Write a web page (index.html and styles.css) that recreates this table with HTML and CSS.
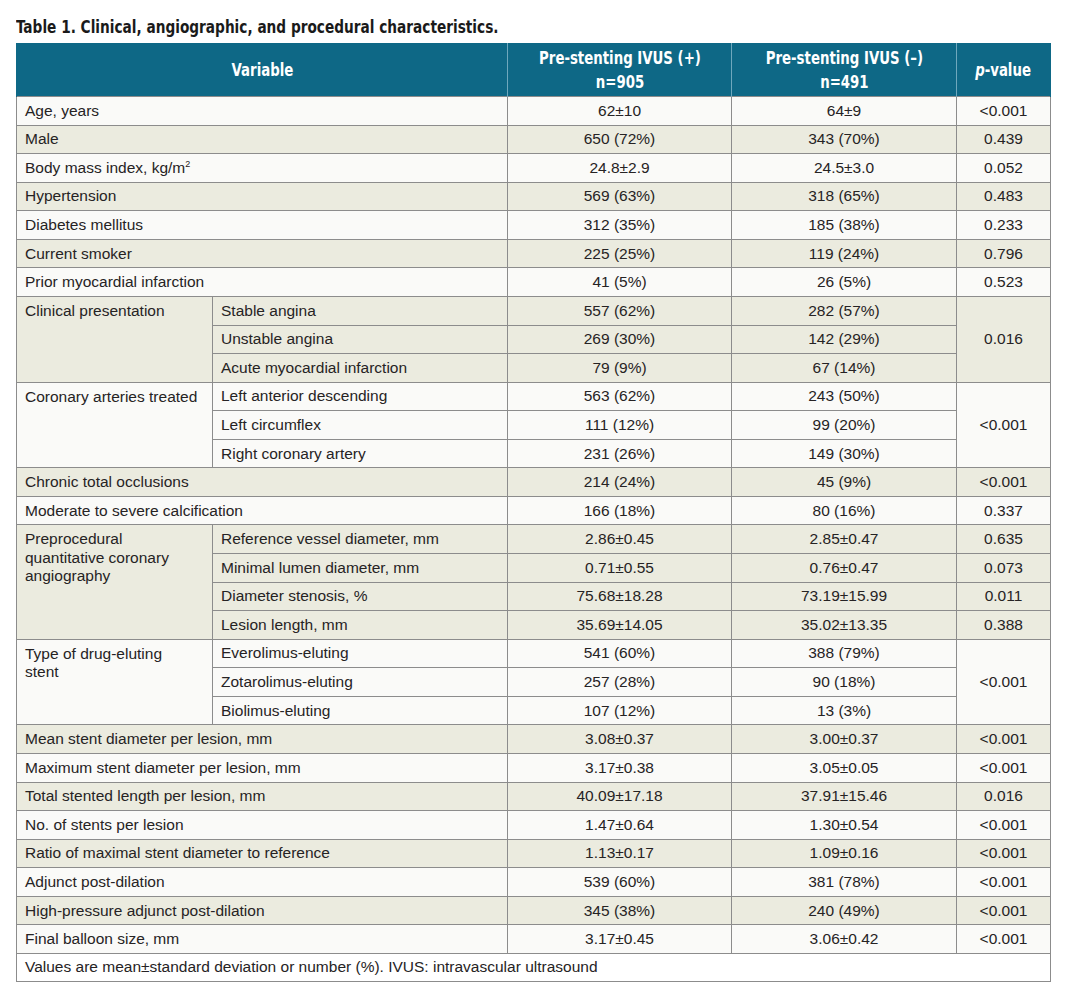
FILE: index.html
```html
<!DOCTYPE html>
<html lang="en">
<head>
<meta charset="utf-8">
<title>Table 1</title>
<link rel="stylesheet" href="styles.css">
</head>
<body>
<div class="page">
  <h1 class="caption"><span class="squeeze">Table 1. Clinical, angiographic, and procedural characteristics.</span></h1>
  <table class="data">
    <colgroup>
      <col class="c-var">
      <col class="c-sub">
      <col class="c-pos">
      <col class="c-neg">
      <col class="c-p">
    </colgroup>
    <thead>
      <tr>
        <th colspan="2"><span class="hs">Variable</span></th>
        <th><span class="hs">Pre-stenting IVUS (+)<br>n=905</span></th>
        <th><span class="hs">Pre-stenting IVUS (–)<br>n=491</span></th>
        <th><span class="hs"><i>p</i>-value</span></th>
      </tr>
    </thead>
    <tbody>
      <tr class="w"><td colspan="2" class="lbl">Age, years</td><td>62±10</td><td>64±9</td><td>&lt;0.001</td></tr>
      <tr class="b"><td colspan="2" class="lbl">Male</td><td>650 (72%)</td><td>343 (70%)</td><td>0.439</td></tr>
      <tr class="w"><td colspan="2" class="lbl">Body mass index, kg/m<sup>2</sup></td><td>24.8±2.9</td><td>24.5±3.0</td><td>0.052</td></tr>
      <tr class="b"><td colspan="2" class="lbl">Hypertension</td><td>569 (63%)</td><td>318 (65%)</td><td>0.483</td></tr>
      <tr class="w"><td colspan="2" class="lbl">Diabetes mellitus</td><td>312 (35%)</td><td>185 (38%)</td><td>0.233</td></tr>
      <tr class="b"><td colspan="2" class="lbl">Current smoker</td><td>225 (25%)</td><td>119 (24%)</td><td>0.796</td></tr>
      <tr class="w"><td colspan="2" class="lbl">Prior myocardial infarction</td><td>41 (5%)</td><td>26 (5%)</td><td>0.523</td></tr>

      <tr class="b"><td rowspan="3" class="lbl grp">Clinical presentation</td><td class="lbl">Stable angina</td><td>557 (62%)</td><td>282 (57%)</td><td rowspan="3">0.016</td></tr>
      <tr class="b"><td class="lbl">Unstable angina</td><td>269 (30%)</td><td>142 (29%)</td></tr>
      <tr class="b"><td class="lbl">Acute myocardial infarction</td><td>79 (9%)</td><td>67 (14%)</td></tr>

      <tr class="w"><td rowspan="3" class="lbl grp">Coronary arteries treated</td><td class="lbl">Left anterior descending</td><td>563 (62%)</td><td>243 (50%)</td><td rowspan="3">&lt;0.001</td></tr>
      <tr class="w"><td class="lbl">Left circumflex</td><td>111 (12%)</td><td>99 (20%)</td></tr>
      <tr class="w"><td class="lbl">Right coronary artery</td><td>231 (26%)</td><td>149 (30%)</td></tr>

      <tr class="b"><td colspan="2" class="lbl">Chronic total occlusions</td><td>214 (24%)</td><td>45 (9%)</td><td>&lt;0.001</td></tr>
      <tr class="w"><td colspan="2" class="lbl">Moderate to severe calcification</td><td>166 (18%)</td><td>80 (16%)</td><td>0.337</td></tr>

      <tr class="b"><td rowspan="4" class="lbl grp">Preprocedural<br>quantitative coronary<br>angiography</td><td class="lbl">Reference vessel diameter, mm</td><td>2.86±0.45</td><td>2.85±0.47</td><td>0.635</td></tr>
      <tr class="b"><td class="lbl">Minimal lumen diameter, mm</td><td>0.71±0.55</td><td>0.76±0.47</td><td>0.073</td></tr>
      <tr class="b"><td class="lbl">Diameter stenosis, %</td><td>75.68±18.28</td><td>73.19±15.99</td><td>0.011</td></tr>
      <tr class="b"><td class="lbl">Lesion length, mm</td><td>35.69±14.05</td><td>35.02±13.35</td><td>0.388</td></tr>

      <tr class="w"><td rowspan="3" class="lbl grp">Type of drug-eluting<br>stent</td><td class="lbl">Everolimus-eluting</td><td>541 (60%)</td><td>388 (79%)</td><td rowspan="3">&lt;0.001</td></tr>
      <tr class="w"><td class="lbl">Zotarolimus-eluting</td><td>257 (28%)</td><td>90 (18%)</td></tr>
      <tr class="w"><td class="lbl">Biolimus-eluting</td><td>107 (12%)</td><td>13 (3%)</td></tr>

      <tr class="b"><td colspan="2" class="lbl">Mean stent diameter per lesion, mm</td><td>3.08±0.37</td><td>3.00±0.37</td><td>&lt;0.001</td></tr>
      <tr class="w"><td colspan="2" class="lbl">Maximum stent diameter per lesion, mm</td><td>3.17±0.38</td><td>3.05±0.05</td><td>&lt;0.001</td></tr>
      <tr class="b"><td colspan="2" class="lbl">Total stented length per lesion, mm</td><td>40.09±17.18</td><td>37.91±15.46</td><td>0.016</td></tr>
      <tr class="w"><td colspan="2" class="lbl">No. of stents per lesion</td><td>1.47±0.64</td><td>1.30±0.54</td><td>&lt;0.001</td></tr>
      <tr class="b"><td colspan="2" class="lbl">Ratio of maximal stent diameter to reference</td><td>1.13±0.17</td><td>1.09±0.16</td><td>&lt;0.001</td></tr>
      <tr class="w"><td colspan="2" class="lbl">Adjunct post-dilation</td><td>539 (60%)</td><td>381 (78%)</td><td>&lt;0.001</td></tr>
      <tr class="b"><td colspan="2" class="lbl">High-pressure adjunct post-dilation</td><td>345 (38%)</td><td>240 (49%)</td><td>&lt;0.001</td></tr>
      <tr class="w"><td colspan="2" class="lbl">Final balloon size, mm</td><td>3.17±0.45</td><td>3.06±0.42</td><td>&lt;0.001</td></tr>
    </tbody>
    <tfoot>
      <tr><td colspan="5" class="lbl note">Values are mean±standard deviation or number (%). IVUS: intravascular ultrasound</td></tr>
    </tfoot>
  </table>
</div>
</body>
</html>
```

FILE: styles.css
```css
html, body {
  margin: 0;
  padding: 0;
  background: #ffffff;
}

.page {
  padding: 16px 19px 0 16px;
  font-family: "Liberation Sans", Arial, sans-serif;
  color: #262324;
}

.caption {
  margin: 0 0 6px 0;
  height: 21px;
  font-family: "DejaVu Sans Condensed", "Liberation Sans Narrow", "Liberation Sans", sans-serif;
  font-stretch: condensed;
  font-weight: bold;
  font-size: 18px;
  line-height: 21px;
  color: #1a1a1a;
  white-space: nowrap;
}

.squeeze {
  display: inline-block;
  transform: scaleX(0.845);
  transform-origin: 0 50%;
}

.data {
  width: 1034px;
  border-collapse: collapse;
  table-layout: fixed;
  font-size: 15.5px;
}

.c-var { width: 196px; }
.c-sub { width: 295px; }
.c-pos { width: 224px; }
.c-neg { width: 225px; }
.c-p { width: 94px; }

.data th {
  background: #0e6886;
  color: #ffffff;
  font-family: "DejaVu Sans Condensed", "Liberation Sans Narrow", "Liberation Sans", sans-serif;
  font-stretch: condensed;
  font-weight: bold;
  font-size: 17px;
  line-height: 24px;
  height: 53px;
  padding: 0;
  text-align: center;
  vertical-align: middle;
  border-left: 1px solid #6fa8bd;
  border-right: 1px solid #6fa8bd;
  white-space: nowrap;
}

.data th:first-child { border-left: 1px solid #0e6886; }
.data th:last-child { border-right: 1px solid #0e6886; }

.hs {
  display: inline-block;
  transform: scaleX(0.87);
  transform-origin: 50% 50%;
}

.data th i {
  font-style: italic;
}

.data td {
  height: 27.57px;
  padding: 0 8px;
  border: 1px solid #8c8c8c;
  text-align: center;
  vertical-align: middle;
  line-height: 18px;
  white-space: nowrap;
}

.data td.lbl {
  text-align: left;
}

.data td.grp {
  vertical-align: top;
  padding-top: 5px;
  line-height: 18.5px;
}

.data sup {
  font-size: 9px;
  line-height: 0;
  vertical-align: 6px;
}

.data tr.w td { background: #fafaf8; }
.data tr.b td { background: #ebebdf; }

.data td.note {
  background: #ffffff;
  height: 27px;
}
```
